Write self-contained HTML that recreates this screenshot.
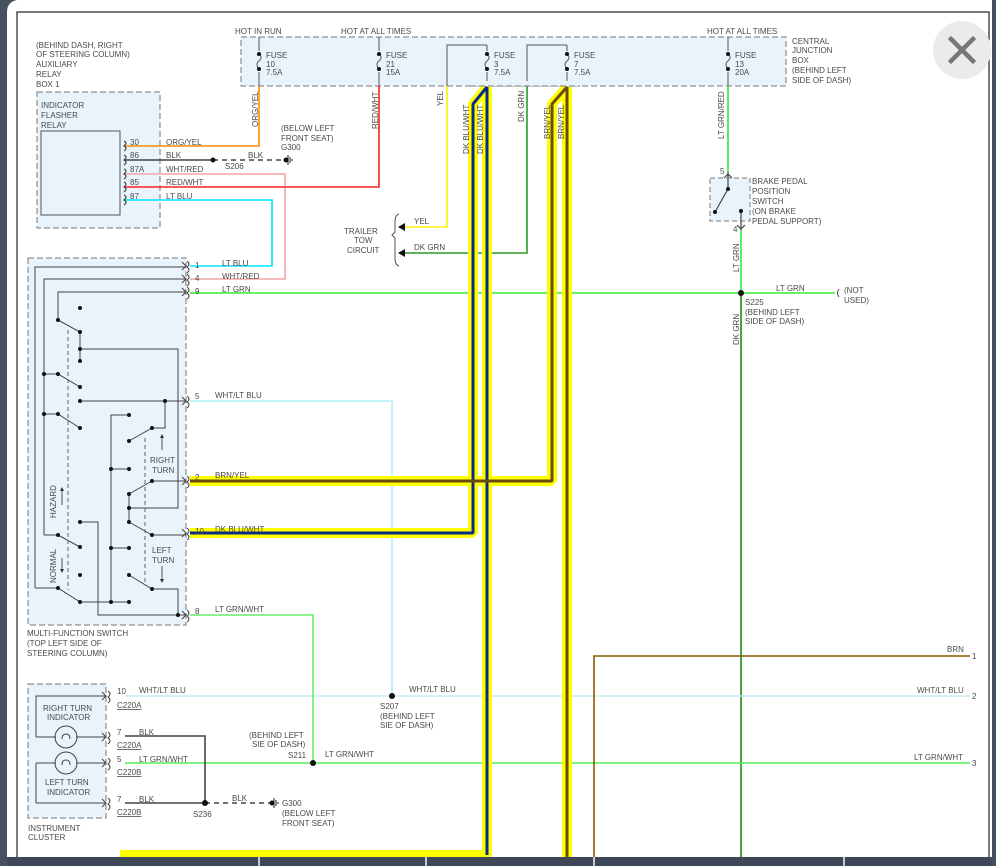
<!DOCTYPE html>
<html><head><meta charset="utf-8"><style>
html,body{margin:0;padding:0;background:#fff;}
svg{display:block;}
text{font-family:"Liberation Sans",sans-serif;font-size:8px;fill:#4a4a4a;}
</style></head><body>
<svg width="996" height="866" viewBox="0 0 996 866" xmlns="http://www.w3.org/2000/svg">
<rect x="0" y="0" width="996" height="866" fill="#fff"/>
<rect x="0" y="0" width="7" height="866" fill="#46505f"/>
<rect x="992" y="0" width="4" height="866" fill="#46505f"/>
<path d="M7 0 H17 Q7 2 7 12 Z" fill="#46505f"/>
<rect x="17" y="12" width="972" height="850" fill="none" stroke="#222" stroke-width="1.2"/>

<!-- fuse box -->
<rect x="241" y="37" width="545" height="49" fill="#e8f3fb" stroke="#777" stroke-dasharray="6,3"/>
<text x="235" y="34">HOT IN RUN</text>
<text x="341" y="34">HOT AT ALL TIMES</text>
<text x="707" y="34">HOT AT ALL TIMES</text>
<text x="792" y="44">CENTRAL</text><text x="792" y="53">JUNCTION</text><text x="792" y="63">BOX</text><text x="792" y="73">(BEHIND LEFT</text><text x="792" y="83">SIDE OF DASH)</text>
<g stroke="#555" fill="none" stroke-width="1">
<path d="M259 37V51M259 72V86M259 54q4 3 0 7q-4 3 0 8"/>
<path d="M379 37V51M379 72V86M379 54q4 3 0 7q-4 3 0 8"/>
<path d="M487 45V51M487 72V86M487 54q4 3 0 7q-4 3 0 8M447 86V45H487"/>
<path d="M567 45V51M567 72V86M567 54q4 3 0 7q-4 3 0 8M527 86V45H567"/>
<path d="M728 37V51M728 72V86M728 54q4 3 0 7q-4 3 0 8"/>
</g>
<g fill="#111"><circle cx="259" cy="54" r="2"/><circle cx="259" cy="69" r="2"/><circle cx="379" cy="54" r="2"/><circle cx="379" cy="69" r="2"/><circle cx="487" cy="54" r="2"/><circle cx="487" cy="69" r="2"/><circle cx="567" cy="54" r="2"/><circle cx="567" cy="69" r="2"/><circle cx="728" cy="54" r="2"/><circle cx="728" cy="69" r="2"/></g>
<text x="266" y="58">FUSE</text><text x="266" y="67">10</text><text x="266" y="75">7.5A</text>
<text x="386" y="58">FUSE</text><text x="386" y="67">21</text><text x="386" y="75">15A</text>
<text x="494" y="58">FUSE</text><text x="494" y="67">3</text><text x="494" y="75">7.5A</text>
<text x="574" y="58">FUSE</text><text x="574" y="67">7</text><text x="574" y="75">7.5A</text>
<text x="735" y="58">FUSE</text><text x="735" y="67">13</text><text x="735" y="75">20A</text>

<!-- relay box -->
<text x="36" y="48">(BEHIND DASH, RIGHT</text><text x="36" y="57">OF STEERING COLUMN)</text><text x="36" y="67">AUXILIARY</text><text x="36" y="77">RELAY</text><text x="36" y="87">BOX 1</text>
<rect x="37" y="92" width="123" height="136" fill="#e8f3fb" stroke="#777" stroke-dasharray="6,3"/>
<text x="41" y="108">INDICATOR</text><text x="41" y="118">FLASHER</text><text x="41" y="128">RELAY</text>
<rect x="41" y="131" width="79" height="84" fill="#e8f3fb" stroke="#555"/>
<text x="130" y="145">30</text><text x="130" y="158">86</text><text x="130" y="172">87A</text><text x="130" y="185">85</text><text x="130" y="199">87</text>
<text x="166" y="145">ORG/YEL</text><text x="166" y="158">BLK</text><text x="166" y="172">WHT/RED</text><text x="166" y="185">RED/WHT</text><text x="166" y="199">LT BLU</text>
<g fill="none" stroke-width="1.6">
<path d="M124 146H259V86" stroke="#ff8c00"/>
<path d="M124 160H213" stroke="#444"/>
<path d="M213 160H286" stroke="#444" stroke-dasharray="5,4"/>
<path d="M124 174H285V279H190" stroke="#f3a6a6"/>
<path d="M124 187H379V86" stroke="#ff2020"/>
<path d="M124 200H272V266H190" stroke="#00e5ff"/>
<path d="M447 86V227H405" stroke="#ffee00"/>
<path d="M527 86V253H405" stroke="#2a9a2a"/>
<path d="M728 86V172" stroke="#33e633"/>
<path d="M741 230V293" stroke="#33e633"/>
<path d="M741 293V857" stroke="#1a8a1a"/>
<path d="M190 293H835" stroke="#33ee33"/>
<path d="M190 401H392V696" stroke="#aef0f8"/>
<path d="M125 696H970" stroke="#c6eef6"/>
<path d="M190 615H313V763" stroke="#66ee66"/>
<path d="M125 763H970" stroke="#55ee55"/>
<path d="M594 857V656H970" stroke="#8a5a00"/>
<path d="M125 736H205V803M125 803H205" stroke="#444"/>
<path d="M205 803H273" stroke="#444" stroke-dasharray="5,4"/>
</g>
<g stroke="#444" stroke-width="1.2" fill="none"><path d="M124 141q4 2 0 5q4 2 0 5M124 155q4 2 0 5q4 2 0 5M124 169q4 2 0 5q4 2 0 5M124 182q4 2 0 5q4 2 0 5M124 195q4 2 0 5q4 2 0 5"/>
<path d="M288 155V165M290 157V163M292 159V161M274 798V808M276 800V806M278 802V804"/></g>
<g fill="#111"><circle cx="213" cy="160" r="2.5"/><circle cx="286" cy="160" r="2.5"/><circle cx="741" cy="293" r="3"/><circle cx="392" cy="696" r="3"/><circle cx="313" cy="763" r="3"/><circle cx="205" cy="803" r="3"/><circle cx="272" cy="803" r="2.5"/></g>
<text x="248" y="158">BLK</text><text x="225" y="169">S206</text>
<text x="281" y="131">(BELOW LEFT</text><text x="281" y="141">FRONT SEAT)</text><text x="281" y="150">G300</text>

<!-- trailer tow -->
<text x="344" y="234">TRAILER</text><text x="354" y="243">TOW</text><text x="347" y="253">CIRCUIT</text>
<path d="M399 214q-4 1-4 8v10l-3 3l3 3v20q0 7 4 8" fill="none" stroke="#555"/>
<path d="M398 227l7-4v8z M398 253l7-4v8z" fill="#111"/>
<text x="414" y="224">YEL</text><text x="414" y="250">DK GRN</text>

<!-- thick highlighted wires -->
<g fill="none" stroke-linejoin="bevel">
<path d="M487 87L473 104V533H190" stroke="#ffff00" stroke-width="10"/>
<path d="M487 87V855H120" stroke="#ffff00" stroke-width="10"/>
<path d="M567 87L552 104V481H190" stroke="#ffff00" stroke-width="10"/>
<path d="M567 87V860" stroke="#ffff00" stroke-width="10"/>
<path d="M487 87L473 104V533H190" stroke="#0a2a8a" stroke-width="3"/>
<path d="M487 87V855" stroke="#0a2a8a" stroke-width="3"/>
<path d="M567 87L552 104V481H190" stroke="#6b4a10" stroke-width="3"/>
<path d="M567 87V860" stroke="#6b4a10" stroke-width="3"/>
</g>
<rect x="470" y="81" width="110" height="5" fill="#e8f3fb"/>
<path d="M470 86H580" stroke="#777" stroke-dasharray="6,3"/>

<!-- vertical labels -->
<g>
<text transform="translate(258,127) rotate(-90)">ORG/YEL</text>
<text transform="translate(378,129) rotate(-90)">RED/WHT</text>
<text transform="translate(443,106) rotate(-90)">YEL</text>
<text transform="translate(469,154) rotate(-90)">DK BLU/WHT</text>
<text transform="translate(483,154) rotate(-90)">DK BLU/WHT</text>
<text transform="translate(524,122) rotate(-90)">DK GRN</text>
<text transform="translate(550,139) rotate(-90)">BRN/YEL</text>
<text transform="translate(564,139) rotate(-90)">BRN/YEL</text>
<text transform="translate(724,139) rotate(-90)">LT GRN/RED</text>
<text transform="translate(739,272) rotate(-90)">LT GRN</text>
<text transform="translate(739,345) rotate(-90)">DK GRN</text>
</g>

<!-- brake switch -->
<rect x="710" y="178" width="40" height="43" fill="#e8f3fb" stroke="#777" stroke-dasharray="5,3"/>
<g fill="none" stroke="#444" stroke-width="1.2"><path d="M728 172V189L715 212M741 211V230M724 178l4-4l4 4M737 225l4 4l4-4"/></g>
<g fill="#111"><circle cx="728" cy="189" r="2"/><circle cx="715" cy="212" r="2"/><circle cx="741" cy="211" r="2"/></g>
<text x="720" y="174">5</text><text x="733" y="232">4</text>
<text x="752" y="184">BRAKE PEDAL</text><text x="752" y="194">POSITION</text><text x="752" y="204">SWITCH</text><text x="752" y="214">(ON BRAKE</text><text x="752" y="224">PEDAL SUPPORT)</text>
<text x="776" y="291">LT GRN</text>
<path d="M839 289q-3 4 0 8" fill="none" stroke="#444"/>
<text x="844" y="293">(NOT</text><text x="844" y="303">USED)</text>
<text x="745" y="305">S225</text><text x="745" y="315">(BEHIND LEFT</text><text x="745" y="324">SIDE OF DASH)</text>

<!-- multifunction switch -->
<rect x="28" y="258" width="158" height="367" fill="#e8f3fb" stroke="#777" stroke-dasharray="6,3"/>
<g fill="none" stroke="#444" stroke-width="1">
<path d="M35 588V267H186M44 535V279H186M58 320V292H186"/>
<path d="M58 320L80 332V361M80 349H178V508H129"/>
<path d="M44 374H58L80 387M80 401H186M165 401V428H152L129 441"/>
<path d="M44 414H58L80 428M129 415H111V602M111 469H129"/>
<path d="M152 481H186M152 481L129 494V522L152 535H186"/>
<path d="M80 522H98V615H186M44 535H58L80 547M111 548H129"/>
<path d="M129 575L152 589H178V615M35 588H58L80 602H129"/>
<path d="M182 262l4 4l-4 4M182 275l4 4l-4 4M182 288l4 4l-4 4M182 397l4 4l-4 4M182 477l4 4l-4 4M182 529l4 4l-4 4M182 611l4 4l-4 4"/>
<path d="M187 261q4 3 0 6q4 3 0 6M187 274q4 3 0 6q4 3 0 6M187 287q4 3 0 6q4 3 0 6M187 396q4 3 0 6q4 3 0 6M187 476q4 3 0 6q4 3 0 6M187 528q4 3 0 6q4 3 0 6M187 610q4 3 0 6q4 3 0 6"/>
</g>
<g stroke="#666" stroke-dasharray="4,3" fill="none"><path d="M68 330V590M145 438V582"/></g>
<g fill="#111">
<circle cx="80" cy="308" r="2"/><circle cx="58" cy="320" r="2"/><circle cx="80" cy="332" r="2"/><circle cx="80" cy="349" r="2"/><circle cx="80" cy="361" r="2"/>
<circle cx="44" cy="374" r="2"/><circle cx="58" cy="374" r="2"/><circle cx="80" cy="387" r="2"/><circle cx="80" cy="401" r="2"/><circle cx="165" cy="401" r="2"/>
<circle cx="152" cy="428" r="2"/><circle cx="129" cy="441" r="2"/><circle cx="44" cy="414" r="2"/><circle cx="58" cy="414" r="2"/><circle cx="80" cy="428" r="2"/>
<circle cx="129" cy="415" r="2"/><circle cx="111" cy="469" r="2"/><circle cx="129" cy="469" r="2"/><circle cx="152" cy="481" r="2"/><circle cx="129" cy="494" r="2"/>
<circle cx="129" cy="508" r="2"/><circle cx="129" cy="522" r="2"/><circle cx="152" cy="535" r="2"/><circle cx="80" cy="522" r="2"/><circle cx="58" cy="535" r="2"/><circle cx="80" cy="547" r="2"/>
<circle cx="111" cy="548" r="2"/><circle cx="129" cy="548" r="2"/><circle cx="80" cy="575" r="2"/><circle cx="129" cy="575" r="2"/><circle cx="152" cy="589" r="2"/>
<circle cx="58" cy="588" r="2"/><circle cx="80" cy="602" r="2"/><circle cx="111" cy="602" r="2"/><circle cx="129" cy="602" r="2"/><circle cx="178" cy="615" r="2"/>
</g>
<text transform="translate(56,518) rotate(-90)">HAZARD</text>
<text transform="translate(56,583) rotate(-90)">NORMAL</text>
<g stroke="#555" fill="none"><path d="M62 490V505M162 437V450M162 566V580M62 558V570"/></g>
<path d="M60 491h4l-2-4zM160 438h4l-2-4zM160 579h4l-2 4zM60 569h4l-2 4z" fill="#333"/>
<text x="150" y="463">RIGHT</text><text x="152" y="473">TURN</text>
<text x="152" y="553">LEFT</text><text x="152" y="563">TURN</text>
<text x="195" y="268">1</text><text x="222" y="266">LT BLU</text>
<text x="195" y="281">4</text><text x="222" y="279">WHT/RED</text>
<text x="195" y="294">9</text><text x="222" y="292">LT GRN</text>
<text x="195" y="399">5</text><text x="215" y="398">WHT/LT BLU</text>
<text x="195" y="480">2</text><text x="215" y="478">BRN/YEL</text>
<text x="195" y="534">10</text><text x="215" y="532">DK BLU/WHT</text>
<text x="195" y="614">8</text><text x="215" y="612">LT GRN/WHT</text>
<text x="27" y="636">MULTI-FUNCTION SWITCH</text><text x="27" y="646">(TOP LEFT SIDE OF</text><text x="27" y="656">STEERING COLUMN)</text>

<!-- instrument cluster -->
<rect x="28" y="684" width="78" height="134" fill="#e8f3fb" stroke="#777" stroke-dasharray="6,3"/>
<g fill="none" stroke="#444" stroke-width="1">
<path d="M36 737V696H106M36 737H56M76 737H106M36 763V803H106M36 763H56M76 763H106"/>
<circle cx="66" cy="737" r="11"/><circle cx="66" cy="763" r="11"/>
<path d="M62 739q0-5 4-5q4 0 4 5M62 765q0-5 4-5q4 0 4 5"/>
<path d="M102 692l4 4l-4 4M102 733l4 4l-4 4M102 759l4 4l-4 4M102 799l4 4l-4 4"/>
<path d="M108 691q4 3 0 6q4 3 0 6M108 732q4 3 0 6q4 3 0 6M108 758q4 3 0 6q4 3 0 6M108 798q4 3 0 6q4 3 0 6"/>
</g>
<text x="43" y="711">RIGHT TURN</text><text x="47" y="720">INDICATOR</text>
<text x="45" y="785">LEFT TURN</text><text x="47" y="795">INDICATOR</text>
<text x="117" y="694">10</text><text x="139" y="693">WHT/LT BLU</text>
<text x="117" y="708" text-decoration="underline">C220A</text>
<text x="117" y="735">7</text><text x="139" y="735">BLK</text>
<text x="117" y="748" text-decoration="underline">C220A</text>
<text x="117" y="762">5</text><text x="139" y="762">LT GRN/WHT</text>
<text x="117" y="775" text-decoration="underline">C220B</text>
<text x="117" y="802">7</text><text x="139" y="802">BLK</text>
<text x="117" y="815" text-decoration="underline">C220B</text>
<text x="193" y="817">S236</text><text x="232" y="801">BLK</text>
<text x="282" y="806">G300</text><text x="282" y="816">(BELOW LEFT</text><text x="282" y="826">FRONT SEAT)</text>
<text x="28" y="831">INSTRUMENT</text><text x="28" y="840">CLUSTER</text>
<text x="249" y="738">(BEHIND LEFT</text><text x="252" y="747">SIE OF DASH)</text><text x="288" y="758">S211</text>
<text x="325" y="757">LT GRN/WHT</text>
<text x="409" y="692">WHT/LT BLU</text>
<text x="380" y="709">S207</text><text x="380" y="719">(BEHIND LEFT</text><text x="380" y="728">SIE OF DASH)</text>
<text x="947" y="652">BRN</text><text x="917" y="693">WHT/LT BLU</text><text x="914" y="760">LT GRN/WHT</text>
<text x="972" y="659">1</text><text x="972" y="699">2</text><text x="972" y="766">3</text>

<!-- close button -->
<circle cx="962" cy="50" r="29" fill="#ebebeb"/>
<path d="M951 39L973 61M973 39L951 61" stroke="#777" stroke-width="4.5" stroke-linecap="square"/>

<!-- bottom bar -->
<rect x="7" y="857" width="985" height="9" fill="#3e4757"/>
<g fill="#c8c8c8"><rect x="258" y="857" width="2" height="9"/><rect x="425" y="857" width="2" height="9"/><rect x="593" y="857" width="2" height="9"/><rect x="843" y="857" width="2" height="9"/></g>
</svg>
</body></html>
